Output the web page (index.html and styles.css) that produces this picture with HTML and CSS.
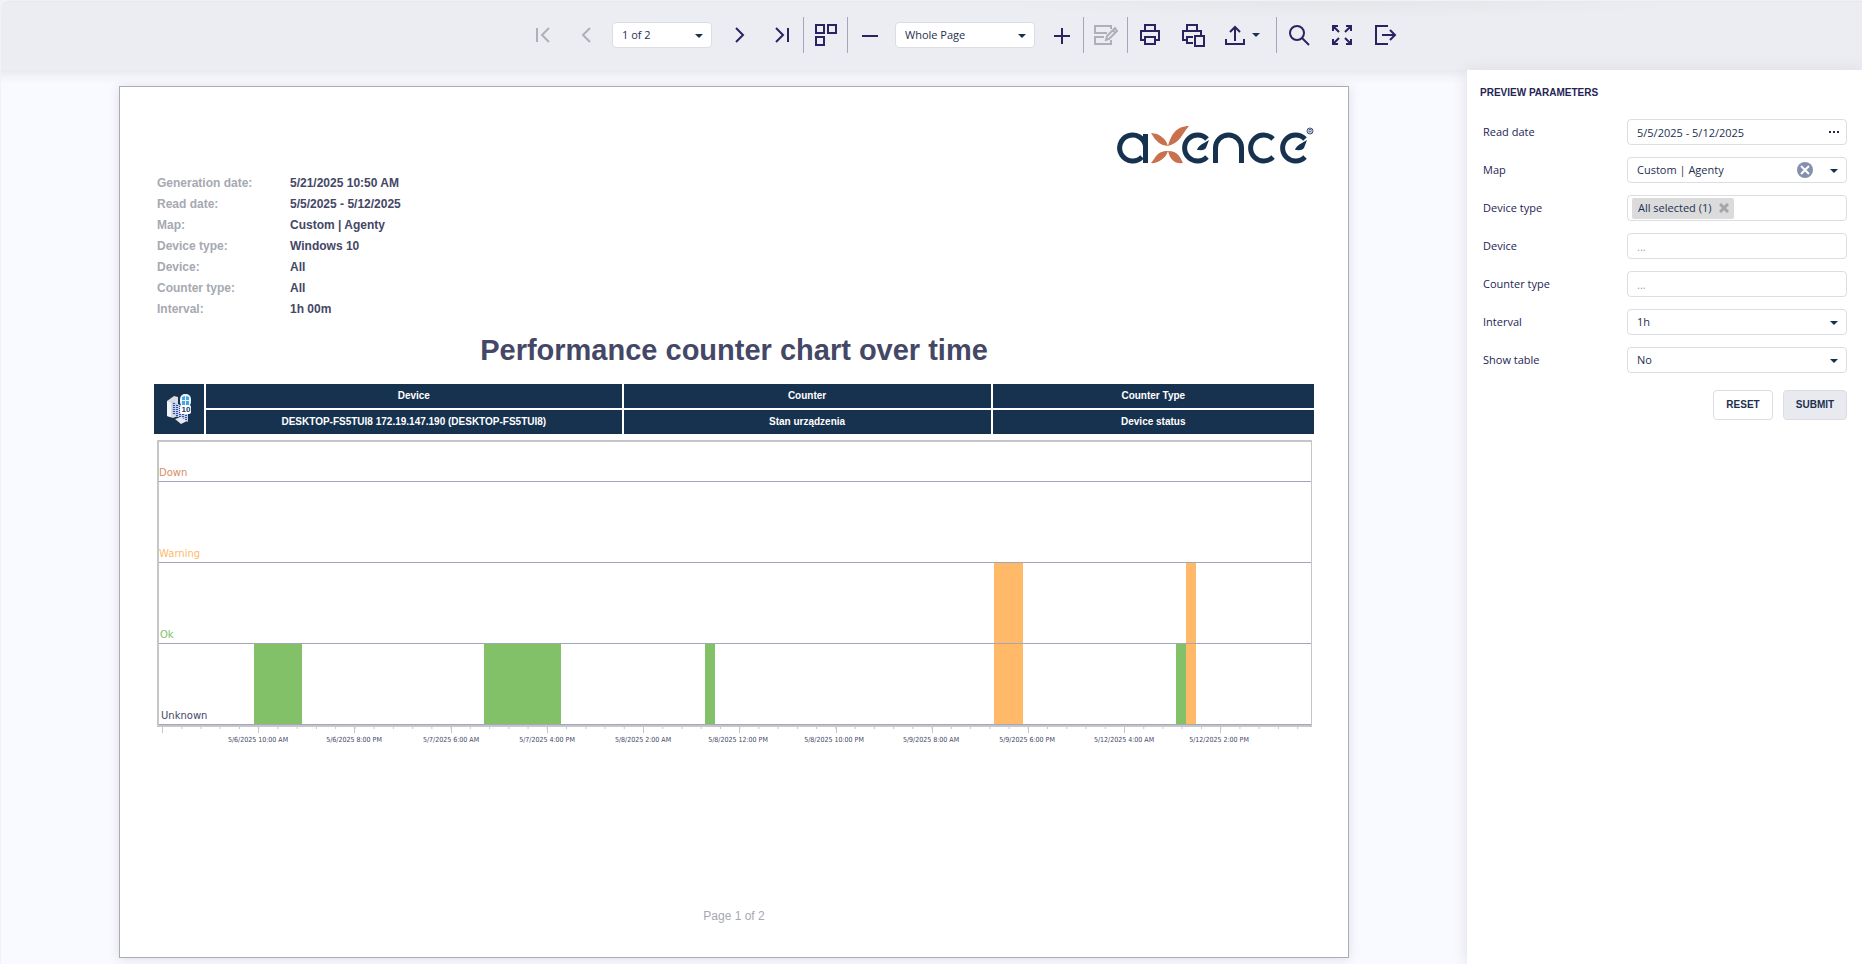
FILE: index.html
```html
<!DOCTYPE html>
<html lang="en">
<head>
<meta charset="utf-8">
<title>Report preview</title>
<link rel="stylesheet" href="styles.css">
</head>
<body>
<div class="viewer">
  <header class="toolbar">
    <button class="tool" aria-label="First page" disabled><svg class="icon" viewBox="0 0 24 24"><path d="M6 5v14M18 5l-7 7 7 7"/></svg></button>
    <button class="tool" aria-label="Previous page" disabled><svg class="icon" viewBox="0 0 24 24"><path d="M16 5l-7 7 7 7"/></svg></button>
    <div class="select select-pages"><select aria-label="Page"><option>1 of 2</option><option>2 of 2</option></select></div>
    <button class="tool" aria-label="Next page"><svg class="icon" viewBox="0 0 24 24"><path d="M9 5l7 7-7 7"/></svg></button>
    <button class="tool" aria-label="Last page"><svg class="icon" viewBox="0 0 24 24"><path d="M6 5l7 7-7 7M18 5v14"/></svg></button>
    <span class="separator"></span>
    <button class="tool" aria-label="Multipage mode"><svg class="icon" viewBox="0 0 24 24"><path d="M2 2h8v8H2zM14 2h8v8h-8zM2 14h8v8H2z"/></svg></button>
    <span class="separator"></span>
    <button class="tool" aria-label="Zoom out"><svg class="icon" viewBox="0 0 24 24"><path d="M4 13h16"/></svg></button>
    <div class="select select-zoom"><select aria-label="Zoom"><option>Whole Page</option><option>100%</option></select></div>
    <button class="tool" aria-label="Zoom in"><svg class="icon" viewBox="0 0 24 24"><path d="M4 13h16M12 5v16"/></svg></button>
    <span class="separator"></span>
    <button class="tool" aria-label="Highlight editing fields" disabled><svg class="icon" viewBox="0 0 24 24"><path d="M17 6V3H1v7h12M10 14H1v7h16v-4M12 17l1-4 8-8 2 3-8 8zM19 7l2 3"/></svg></button>
    <span class="separator"></span>
    <button class="tool" aria-label="Print"><svg class="icon" viewBox="0 0 24 24"><path d="M7 8V2h10v6M7 17H3V8h18v9h-4M7 14h10v7H7z"/></svg></button>
    <button class="tool" aria-label="Print page"><svg class="icon" viewBox="0 0 24 24"><path d="M6 8V2h10v6M12 20H6v-6h6M6 17H2V8h18v4M14 13h9v10h-9z"/></svg></button>
    <button class="tool tool-export" aria-label="Export to"><svg class="icon" viewBox="0 0 24 24"><path d="M3 16v5h18v-5M12 18V4M7 9l5-5 5 5"/></svg><span class="caret"></span></button>
    <span class="separator"></span>
    <button class="tool" aria-label="Search"><svg class="icon" viewBox="0 0 24 24"><circle cx="10" cy="10" r="7"/><path d="M15 15l7 7"/></svg></button>
    <button class="tool" aria-label="Full screen"><svg class="icon" viewBox="0 0 24 24"><path d="M3 8V3h5M16 3h5v5M21 16v5h-5M8 21H3v-5M3 3l6 6M21 3l-6 6M21 21l-6-6M3 21l6-6"/></svg></button>
    <button class="tool" aria-label="Exit"><svg class="icon" viewBox="0 0 24 24"><path d="M15 3H3v18h12M9 12h13M17 7l5 5-5 5"/></svg></button>
  </header>

  <main class="workspace">
    <div class="preview">
      <article class="page">
        <svg class="logo" viewBox="0 0 200 40" role="img" aria-label="axence">
          <g class="logo-letters">
            <path d="M28 31A13 13 0 1 1 31.500 20"/><path d="M31.500 8V37"/>
            <path d="M93 31A13 13 0 1 1 93 13"/>
            <path d="M101.500 37V22a13 13 0 0 1 26 0V37"/>
            <path d="M159 13A13 13 0 1 0 159 31"/>
            <path d="M191 31A13 13 0 1 1 191 13"/>
          </g>
          <path class="logo-leaf" d="M95 14L92 22C90 25 86 24 83 24Q84 20 90 17zM193 14L190 22C188 25 184 24 181 24Q182 20 188 17z"/>
          <path class="logo-x" d="M37 7L43 8Q52 12 54 20Q44 20 37 7zM75 0C62 0 57 9 54 20C66 17 68 8 75 0zM37 37C42 38 52 33 54 25C42 25 42 32 37 37zM54 25C64 25 66 31 69 37C61 38 56 34 54 25z"/>
          <circle class="logo-mark" cx="196" cy="5" r="3"/>
          <text class="logo-reg" x="196" y="7">R</text>
        </svg>
        <dl class="facts">
          <dt>Generation date:</dt><dd>5/21/2025 10:50 AM</dd>
          <dt>Read date:</dt><dd>5/5/2025 - 5/12/2025</dd>
          <dt>Map:</dt><dd>Custom | Agenty</dd>
          <dt>Device type:</dt><dd>Windows 10</dd>
          <dt>Device:</dt><dd>All</dd>
          <dt>Counter type:</dt><dd>All</dd>
          <dt>Interval:</dt><dd>1h 00m</dd>
        </dl>
        <h1 class="title">Performance counter chart over time</h1>
        <table class="devices">
          <colgroup><col class="col-icon"><col class="col-device"><col class="col-counter"><col class="col-type"></colgroup>
          <tr>
            <td rowspan="2"><svg class="device-icon" viewBox="0 0 26 30" role="img" aria-label="Windows 10 computer">
              <path fill="#d9dce3" d="M1 7l7-5 4 1v19l-5 2-6-2z"/><path fill="#f4f5f8" d="M1 7l4 2v14l-4-1z"/>
              <path fill="#c3cdea" d="M6 7l16 8v13L6 20z"/><path stroke="#3152a4" stroke-width="2" stroke-dasharray="1 1" d="M8 9v11M11 11v11M14 12v12M17 14v11M20 15v11"/>
              <path fill="#e7e9ee" d="M9 25l6-2 6 4-6 3z"/><rect x="14" width="11" height="13" rx="5" fill="#e8f5ff"/>
              <path fill="#48a5de" d="M16 3l3-1v4h-3zM20 2l3 1v3h-3zM16 7h3v4h-3zM20 7h3v4h-3z"/>
              <rect x="14" y="11" width="11" height="9" rx="2" fill="#fff"/><text class="device-version" x="20" y="18">10</text>
            </svg></td>
            <th>Device</th><th>Counter</th><th>Counter Type</th>
          </tr>
          <tr><td>DESKTOP-FS5TUI8 172.19.147.190 (DESKTOP-FS5TUI8)</td><td>Stan urządzenia</td><td>Device status</td></tr>
        </table>
        <svg class="chart" viewBox="0 0 1160 310" role="img" aria-label="Device status over time">
          <path class="frame" d="M3 1H1157"/><path class="frame" d="M4 0V286"/><path class="frame-thin" d="M1157.500 0V286"/>
          <path class="ok" d="M100 204h48v80h-48zM330 204h77v80h-77zM551 204h10v80h-10zM1022 204h10v80h-10z"/>
          <path class="warning" d="M840 123h29v161h-29zM1032 123h10v161h-10z"/>
          <path class="grid" d="M5 41.500H1157M5 122.500H1157M5 203.500H1157M5 284.500H1157"/>
          <path class="frame" d="M3 286H1158"/>
          <path class="ticks-minor" d="M8 288H1150"/>
          <path class="ticks-major" d="M8.500 287v6M104.500 287v6M200.500 287v6M297.500 287v6M393.500 287v6M489.500 287v6M585.500 287v6M682.500 287v6M778.500 287v6M874.500 287v6M970.500 287v6M1066.500 287v6"/>
          <g class="levels">
            <text class="level-down" x="5" y="36">Down</text>
            <text class="level-warning" x="5" y="117">Warning</text>
            <text class="level-ok" x="6" y="198">Ok</text>
            <text class="level-unknown" x="7" y="279">Unknown</text>
          </g>
          <g class="dates">
            <text x="104" y="302">5/6/2025 10:00 AM</text><text x="200" y="302">5/6/2025 8:00 PM</text>
            <text x="297" y="302">5/7/2025 6:00 AM</text><text x="393" y="302">5/7/2025 4:00 PM</text>
            <text x="489" y="302">5/8/2025 2:00 AM</text><text x="584" y="302">5/8/2025 12:00 PM</text>
            <text x="680" y="302">5/8/2025 10:00 PM</text><text x="777" y="302">5/9/2025 8:00 AM</text>
            <text x="873" y="302">5/9/2025 6:00 PM</text><text x="970" y="302">5/12/2025 4:00 AM</text>
            <text x="1065" y="302">5/12/2025 2:00 PM</text>
          </g>
        </svg>
        <footer class="page-footer">Page 1 of 2</footer>
      </article>
    </div>

    <aside class="panel">
      <h2 class="panel-title">PREVIEW PARAMETERS</h2>
      <form class="form">
        <label for="read-date">Read date</label>
        <div class="field"><input id="read-date" type="text" value="5/5/2025 - 5/12/2025"><button type="button" class="more" aria-label="Choose dates"><svg viewBox="0 0 10 2"><path d="M0 0h2v2H0zM4 0h2v2H4zM8 0h2v2H8z"/></svg></button></div>
        <label for="map">Map</label>
        <div class="field select"><select id="map"><option>Custom | Agenty</option></select><button type="button" class="clear" aria-label="Clear map"><svg viewBox="0 0 16 16"><circle cx="8" cy="8" r="8"/><path d="M4 4l8 8M12 4l-8 8"/></svg></button></div>
        <label for="device-type">Device type</label>
        <div class="field"><span class="tag">All selected (1)<button type="button" class="remove" aria-label="Remove"><svg viewBox="0 0 10 10"><path d="M1 1l8 8M9 1l-8 8"/></svg></button></span><input id="device-type" type="text"></div>
        <label for="device">Device</label>
        <div class="field"><input id="device" type="text" placeholder="..."></div>
        <label for="counter-type">Counter type</label>
        <div class="field"><input id="counter-type" type="text" placeholder="..."></div>
        <label for="interval">Interval</label>
        <div class="field select"><select id="interval"><option>1h</option></select></div>
        <label for="show-table">Show table</label>
        <div class="field select"><select id="show-table"><option>No</option><option>Yes</option></select></div>
        <div class="actions"><button type="reset" class="button">RESET</button><button type="submit" class="button button-primary">SUBMIT</button></div>
      </form>
    </aside>
  </main>
</div>
</body>
</html>
```
FILE: styles.css
```css
* { box-sizing: border-box; }
body {
  margin: 0;
  background: #f4f5f9;
  color: #1d3050;
  font: 11px/16px "Open Sans", "Noto Sans", sans-serif;
}
button, input, select { font: inherit; color: inherit; }
button { padding: 0; border: 0; background: none; }

.viewer {
  display: flex;
  flex-direction: column;
  min-height: 100vh;
  padding: 1px 0 0 1px;
  background: #f1f2f6;
}

/* Toolbar */
.toolbar {
  display: flex;
  align-items: center;
  justify-content: center;
  height: 69px;
  padding: 0 0 3px 64px;
  border-top: 1px solid #e7e8ed;
  border-radius: 8px 0 0 0;
  background: radial-gradient(ellipse 20% 16px at 72% 0, #e5e6e9, #ecedf2);
}
.tool {
  display: flex;
  align-items: center;
  justify-content: center;
  width: 43px;
  height: 36px;
  color: #2a2261;
}
.tool:disabled { color: #afb0b7; }
.tool-export {
  justify-content: flex-start;
  gap: 5px;
  width: 62px;
  padding-left: 9px;
}
.icon { width: 24px; height: 24px; fill: none; stroke: currentColor; stroke-width: 2; }
.caret { border: 4px solid transparent; border-top-color: #1d3050; border-bottom: 0; }
.separator { width: 1px; height: 36px; background: #a3a7ba; }

.select { position: relative; background: #fff; border: 1px solid #dcdde3; border-radius: 4px; }
.select::after {
  content: "";
  position: absolute;
  top: 11px;
  right: 8px;
  border: 4px solid transparent;
  border-top-color: #16304f;
  border-bottom: 0;
  pointer-events: none;
}
.select select {
  width: 100%;
  height: 24px;
  padding: 0 9px;
  border: 0;
  background: none;
  appearance: none;
}
.select-pages { width: 100px; margin: 0 5px; }
.select-zoom { width: 140px; margin: 0 5px 0 4px; }

/* Work area */
.workspace {
  display: flex;
  flex: 1;
  background: #f9faff;
}
.preview {
  flex: 1;
  min-width: 0;
  padding: 16px 118px 6px;
  background: linear-gradient(#e8e9ed, #f2f3f8 6px, #f9faff 14px);
}

/* Report page */
.page {
  display: flex;
  flex-direction: column;
  min-height: 872px;
  padding: 39px 34px 33px;
  border: 1px solid #abacb4;
  background: #fff;
  box-shadow: 0 1px 10px #dcdde3;
}
.logo { align-self: flex-end; width: 200px; height: 40px; }
.logo-letters { fill: none; stroke: #17324f; stroke-width: 5; }
.logo-leaf { fill: #17324f; }
.logo-x { fill: #c9714f; }
.logo-mark { fill: none; stroke: #3a5275; stroke-width: 1; }
.logo-reg { fill: #3a5275; font: bold 5px "Liberation Sans", sans-serif; text-anchor: middle; }
.facts {
  display: grid;
  grid-template-columns: 133px 1fr;
  margin: 7px 3px 0;
  font: bold 12px/21px "Liberation Sans", Arial, sans-serif;
}
.facts dt { color: #a6a9b1; }
.facts dd { margin: 0; color: #444766; }
.title {
  margin: 12px 0 14px;
  color: #444766;
  font: bold 29px/36px "Liberation Sans", Arial, sans-serif;
  text-align: center;
}
.devices {
  width: 100%;
  border-collapse: collapse;
  table-layout: fixed;
  color: #fff;
  font: bold 10px/14px "Liberation Sans", Arial, sans-serif;
  text-align: center;
}
.devices th, .devices td {
  height: 26px;
  padding: 0;
  border: 2px solid #fff;
  background: #17324f;
}
.devices tr > :first-child[rowspan] { border-left: 0; }
.devices tr > :last-child { border-right: 0; }
.col-icon { width: 51px; }
.col-device { width: 36%; }
.col-type { width: 27.8%; }
.device-icon { display: block; width: 26px; height: 30px; margin: 0 auto; }
.device-version { fill: #223a68; font: bold 8px "Liberation Sans", sans-serif; text-anchor: middle; }

/* Chart */
.chart { display: block; width: 100%; margin-top: 4px; }
.chart path { fill: none; }
.frame { stroke: #c5c6ca; stroke-width: 2; }
.frame-thin { stroke: #c5c6ca; stroke-width: 1; }
.grid { stroke: #a3a5b9; stroke-width: 1; }
.chart .ok { fill: #82c167; }
.chart .warning { fill: #ffb968; }
.ticks-minor { stroke: #c5c6ca; stroke-width: 2; stroke-dasharray: 1 18.240; }
.ticks-major { stroke: #c5c6ca; stroke-width: 1; }
.levels { font: 10px "DejaVu Sans", Verdana, sans-serif; }
.level-down { fill: #d88e64; }
.level-warning { fill: #ffb968; }
.level-ok { fill: #82c167; }
.level-unknown { fill: #444766; }
.dates { fill: #444766; font: 7px "DejaVu Sans Condensed", "DejaVu Sans", sans-serif; text-anchor: middle; }
.page-footer {
  margin-top: auto;
  color: #a6a9b1;
  font: 12px/16px "Liberation Sans", Arial, sans-serif;
  text-align: center;
}

/* Parameters */
.panel {
  flex: none;
  width: 395px;
  padding: 15px;
  background: #fff;
  box-shadow: 0 0 14px #dcdde3;
}
.panel-title {
  margin: 0 0 18px -2px;
  color: #252455;
  font: bold 10px/16px "Liberation Sans", Arial, sans-serif;
}
.form {
  display: grid;
  grid-template-columns: 1fr 220px;
  gap: 12px 0;
  align-items: center;
}
.form label { padding-left: 1px; color: #252455; }
.field {
  display: flex;
  align-items: center;
  height: 26px;
  border: 1px solid #dcdde3;
  border-radius: 4px;
  background: #fff;
}
.field input {
  flex: 1;
  min-width: 0;
  height: 24px;
  padding: 0 9px;
  border: 0;
  outline: 0;
  background: none;
}
.field input::placeholder { color: #9aa0ad; }
.more { width: 24px; height: 24px; }
.more svg { display: block; width: 10px; height: 2px; margin: 0 auto; fill: #252455; }
.clear { position: absolute; top: 4px; right: 33px; }
.clear svg { display: block; width: 16px; height: 16px; fill: #8590ac; stroke: #fff; stroke-width: 2; }
.clear circle { stroke: none; }
.tag {
  display: flex;
  align-items: center;
  gap: 8px;
  height: 21px;
  margin-left: 4px;
  padding: 0 5px 0 6px;
  border-radius: 2px;
  background: #dbdbdc;
}
.remove svg { display: block; width: 10px; height: 10px; stroke: #a3a5ad; stroke-width: 3; }
.actions {
  display: flex;
  grid-column: 1 / -1;
  justify-content: flex-end;
  gap: 10px;
  margin-top: 5px;
}
.button {
  width: 60px;
  height: 30px;
  border: 1px solid #dcdde3;
  border-radius: 4px;
  font: bold 10px/16px "Liberation Sans", Arial, sans-serif;
}
.button-primary { width: 64px; background: #e9eaef; }
```
